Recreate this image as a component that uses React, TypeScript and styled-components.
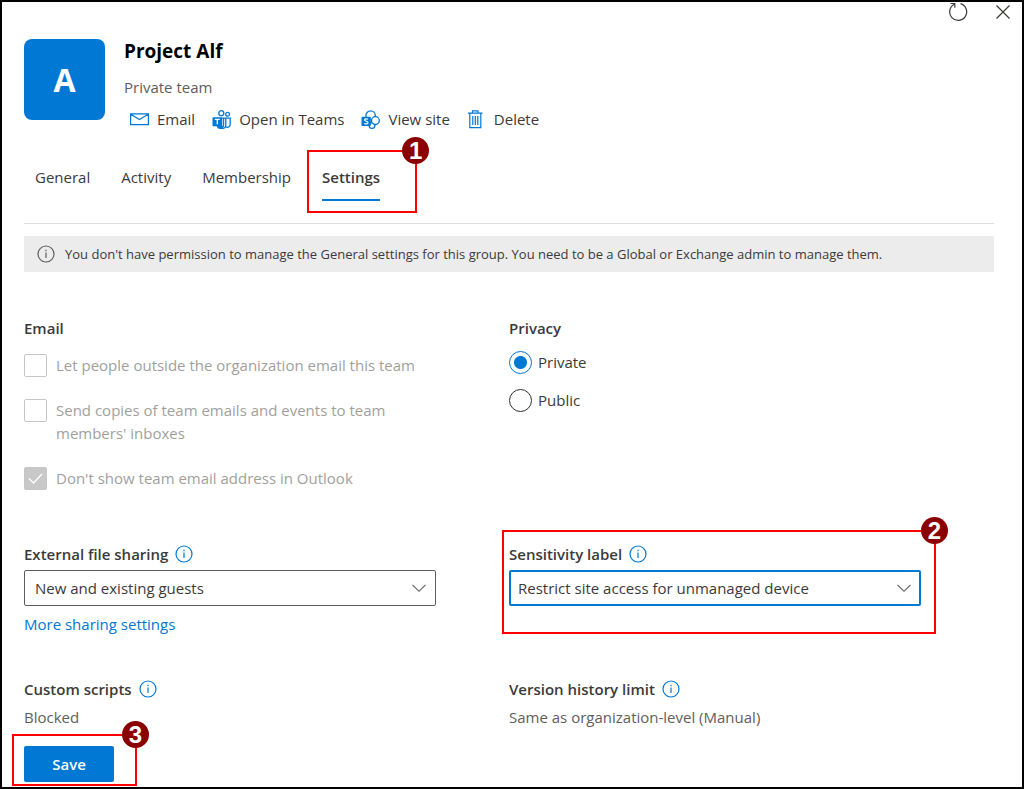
import React, { ReactNode, useState } from "react";
import styled, { createGlobalStyle, css } from "styled-components";

const GlobalStyle = createGlobalStyle`
  *, *::before, *::after { box-sizing: border-box; }
  body {
    margin: 0;
    background: #fff;
    color: #3b3a39;
    font-family: "Open Sans", "Noto Sans", sans-serif;
    font-size: 15px;
    line-height: 24px;
  }
  button, select, input { font: inherit; color: inherit; }
`;

const blue = "#0078d4";

const Panel = styled.div`
  min-height: 100vh;
  border: 2px solid #000;
  padding: 0 28px 5px 22px;
`;

const TopBar = styled.div`
  display: flex;
  justify-content: flex-end;
  gap: 25px;
  height: 20px;
  margin: 0 -19px 17px 0;
`;

const IconButton = styled.button`
  display: flex;
  align-items: center;
  justify-content: center;
  width: 20px;
  height: 20px;
  padding: 0;
  border: 0;
  background: none;
`;

const Header = styled.header`
  display: flex;
  gap: 19px;
`;

const Avatar = styled.div`
  display: flex;
  align-items: center;
  justify-content: center;
  flex: none;
  width: 81px;
  height: 81px;
  border-radius: 8px;
  background: ${blue};
  color: #fff;
  font-size: 32px;
  font-weight: 700;
`;

const Title = styled.h1`
  margin: 0 0 12px;
  color: #000;
  font-size: 19px;
  font-weight: 700;
  line-height: 24px;
`;

const Subtitle = styled.p`
  margin: 0 0 8px;
  color: #605e5c;
`;

const Actions = styled.div`
  display: flex;
  gap: 17px;
  padding-left: 6px;
`;

const ActionButton = styled.button`
  display: flex;
  align-items: center;
  gap: 8px;
  padding: 0;
  border: 0;
  background: none;
  white-space: nowrap;
`;

const Tabs = styled.nav`
  display: flex;
  gap: 31px;
  padding: 34px 11px 22px;
  border-bottom: 1px solid #e1dfdd;
`;

const Tab = styled.button<{ $active?: boolean }>`
  position: relative;
  padding: 0 0 10px;
  border: 0;
  border-bottom: 2px solid ${(p) => (p.$active ? blue : "transparent")};
  background: none;
  font-weight: ${(p) => (p.$active ? 600 : 400)};
`;

const Notice = styled.div`
  display: flex;
  align-items: center;
  gap: 10px;
  min-height: 36px;
  margin-top: 12px;
  padding: 0 13px;
  background: #ececec;
  font-size: 13px;
`;

const Grid = styled.div`
  display: grid;
  grid-template-columns: 1fr 1fr;
  padding-top: 44px;
`;

const Cell = styled.section<{ $space?: number }>`
  position: relative;
  padding-bottom: ${(p) => p.$space ?? 0}px;
`;

const Group = styled.fieldset`
  margin: 0;
  padding: 0;
  border: 0;
`;

const headingText = css`
  font-weight: 600;
  font-size: 15px;
  line-height: 24px;
`;

const Legend = styled.legend`
  ${headingText}
  padding: 0;
`;

const Heading = styled.div`
  ${headingText}
  display: flex;
  align-items: center;
  gap: 7px;
  margin-bottom: 4px;
`;

const CheckList = styled.div`
  display: grid;
  gap: 22px;
  width: 85%;
  padding-top: 14px;
  padding-bottom: 1px;
`;

const RadioList = styled.div`
  display: grid;
  gap: 15px;
  padding-top: 11px;
`;

const Choice = styled.label<{ $disabled?: boolean; $gap: number }>`
  display: flex;
  gap: ${(p) => p.$gap}px;
  line-height: 23px;
  color: ${(p) => (p.$disabled ? "#a19f9d" : "inherit")};
`;

const Mark = styled.span`
  position: relative;
  flex: none;
  width: 23px;
  height: 23px;

  svg {
    position: absolute;
    inset: 0;
    pointer-events: none;
  }
`;

const CheckInput = styled.input`
  appearance: none;
  display: block;
  width: 23px;
  height: 23px;
  margin: 0;
  border: 1px solid #c8c6c4;
  border-radius: 2px;
  &:checked { background: #c8c8c8; }
`;

const RadioInput = styled.input`
  appearance: none;
  display: block;
  width: 23px;
  height: 23px;
  margin: 0;
  border: 1px solid #323130;
  border-radius: 50%;
  &:checked {
    border-color: ${blue};
    background: radial-gradient(circle, ${blue} 0 6px, #fff 7px);
  }
`;

const SelectBox = styled.div`
  position: relative;
  width: 85%;
  margin-bottom: 6px;

  svg {
    position: absolute;
    right: 9px;
    top: 10px;
    pointer-events: none;
  }
`;

const Select = styled.select<{ $focused?: boolean }>`
  appearance: none;
  display: block;
  width: 100%;
  height: 36px;
  padding: 0 32px 0 ${(p) => (p.$focused ? 7 : 10)}px;
  border: ${(p) => (p.$focused ? `2px solid ${blue}` : "1px solid #605e5c")};
  border-radius: 2px;
  background: #fff;
  outline: none;
`;

const Link = styled.a`
  color: ${blue};
  text-decoration: none;
`;

const Value = styled.div`
  color: #605e5c;
`;

const Footer = styled.div`
  position: relative;
  width: max-content;
  margin-top: 17px;
`;

const SaveButton = styled.button`
  display: block;
  width: 90px;
  height: 36px;
  border: 0;
  border-radius: 2px;
  background: ${blue};
  color: #fff;
  font-weight: 600;
`;

const Outline = styled.span<{ $inset: string }>`
  position: absolute;
  inset: ${(p) => p.$inset};
  border: 2px solid #f00;
  pointer-events: none;
`;

const Badge = styled.span`
  position: absolute;
  top: -15px;
  right: -14px;
  width: 27px;
  height: 27px;
  border-radius: 50%;
  background: #8b0000;
  color: #fff;
  font: bold 24px/27px "Liberation Sans", Arial, sans-serif;
  text-align: center;
`;

function Callout({ step, inset }: { step: number; inset: string }) {
  return (
    <Outline $inset={inset}>
      <Badge>{step}</Badge>
    </Outline>
  );
}

function InfoIcon({ color = blue }: { color?: string }) {
  return (
    <svg width="18" height="18" viewBox="0 0 18 18" fill="none" stroke={color} strokeWidth="1.2" aria-hidden="true">
      <circle cx="9" cy="9" r="8" />
      <path d="M9 7.6v5.4M9 4.8v1.4" />
    </svg>
  );
}

function Chevron() {
  return (
    <svg width="16" height="16" viewBox="0 0 16 16" fill="none" stroke="#605e5c" strokeWidth="1.1" aria-hidden="true">
      <path d="M1.5 4.8L8 11.3l6.5-6.5" />
    </svg>
  );
}

function MailIcon() {
  return (
    <svg width="19" height="19" viewBox="0 0 19 19" fill="none" stroke={blue} strokeWidth="1.2" aria-hidden="true">
      <path d="M.6 3.8h17.8v10.8H.6zM.8 4.3l8.7 5.2 8.7-5.2" />
    </svg>
  );
}

function TeamsIcon() {
  return (
    <svg width="19" height="19" viewBox="0 0 19 19" fill="none" stroke={blue} strokeWidth="1.3" aria-hidden="true">
      <circle cx="9.3" cy="3.2" r="2.5" />
      <circle cx="15.6" cy="4.3" r="1.9" />
      <path d="M14 8.2h4.2v6.3a2.8 2.8 0 0 1-4.2 2.4" />
      <path d="M9.5 8.2h4.3v6.8a3.4 3.4 0 0 1-3.4 3.4H8.500a3.400 3.400 0 0 1-3.300-2.400" />
      <path d="M5 15.800h5.800V8.200h1.400v6.800c0 2-1.200 3.300-3.200 3.300-2.200 0-3.500-1-4-2.500z" fill={blue} stroke="none" />
      <rect x=".5" y="7.200" width="9.600" height="9" rx=".8" fill={blue} stroke="none" />
      <path d="M2.800 9.400h5M5.300 9.400v4.900" stroke="#fff" />
    </svg>
  );
}

function SharePointIcon() {
  return (
    <svg width="19" height="19" viewBox="0 0 19 19" fill="#fff" stroke={blue} strokeWidth="1.3" aria-hidden="true">
      <circle cx="11" cy="15.400" r="2.900" />
      <circle cx="9.600" cy="5.500" r="4.700" />
      <circle cx="14.400" cy="10.600" r="3.900" />
      <rect x=".5" y="6.800" width="9.300" height="9.300" rx=".8" fill={blue} stroke="none" />
      <path d="M7 9.300c-1.300-.8-3.400-.6-3.400.7 0 1.500 3.400 1 3.400 2.700 0 1.400-2.300 1.600-3.700.7" fill="none" stroke="#fff" strokeWidth="1.200" />
    </svg>
  );
}

function TrashIcon() {
  return (
    <svg width="19" height="19" viewBox="0 0 19 19" fill="none" stroke={blue} strokeWidth="1.2" aria-hidden="true">
      <path d="M1 3.200h14.500M5.500 3V.9H11V3M2.800 3.400v14.200h11V3.400M5.800 6v9M8.300 6v9M10.800 6v9" />
    </svg>
  );
}

function RefreshIcon() {
  return (
    <svg width="20" height="20" viewBox="0 0 20 20" fill="none" stroke="#3b3a39" strokeWidth="1.2" aria-hidden="true">
      <path d="M12.500 1.700A8.500 8.500 0 1 1 6.300 2.300M2.500 1.500h4.300v4.300" />
    </svg>
  );
}

function CloseIcon() {
  return (
    <svg width="20" height="20" viewBox="0 0 20 20" fill="none" stroke="#3b3a39" strokeWidth="1.2" aria-hidden="true">
      <path d="M3.500 3.500l13 13M16.500 3.500l-13 13" />
    </svg>
  );
}

function Check({ children, checked }: { children: ReactNode; checked?: boolean }) {
  return (
    <Choice $disabled $gap={9}>
      <Mark>
        <CheckInput type="checkbox" disabled defaultChecked={checked} />
        {checked && (
          <svg viewBox="0 0 23 23" fill="none" stroke="#fff" strokeWidth="1.4" aria-hidden="true">
            <path d="M5 11.500l4.500 4.500 8.500-9" />
          </svg>
        )}
      </Mark>
      <span>{children}</span>
    </Choice>
  );
}

export default function App() {
  const [privacy, setPrivacy] = useState("Private");

  return (
    <>
      <GlobalStyle />
      <Panel>
        <TopBar>
          <IconButton aria-label="Refresh"><RefreshIcon /></IconButton>
          <IconButton aria-label="Close"><CloseIcon /></IconButton>
        </TopBar>
        <Header>
          <Avatar>A</Avatar>
          <div>
            <Title>Project Alf</Title>
            <Subtitle>Private team</Subtitle>
            <Actions>
              <ActionButton><MailIcon />Email</ActionButton>
              <ActionButton><TeamsIcon />Open in Teams</ActionButton>
              <ActionButton><SharePointIcon />View site</ActionButton>
              <ActionButton><TrashIcon />Delete</ActionButton>
            </Actions>
          </div>
        </Header>
        <Tabs>
          <Tab>General</Tab>
          <Tab>Activity</Tab>
          <Tab>Membership</Tab>
          <Tab $active>
            Settings
            <Callout step={1} inset="-15px -37px -14px -15px" />
          </Tab>
        </Tabs>
        <Notice>
          <InfoIcon color="#605e5c" />
          <span>You don't have permission to manage the General settings for this group. You need to be a Global or Exchange admin to manage them.</span>
        </Notice>
        <Grid>
          <Cell $space={51}>
            <Group>
              <Legend>Email</Legend>
              <CheckList>
                <Check>Let people outside the organization email this team</Check>
                <Check>Send copies of team emails and events to team members' inboxes</Check>
                <Check checked>Don't show team email address in Outlook</Check>
              </CheckList>
            </Group>
          </Cell>
          <Cell>
            <Group>
              <Legend>Privacy</Legend>
              <RadioList>
                {["Private", "Public"].map((name) => (
                  <Choice key={name} $gap={6}>
                    <RadioInput type="radio" name="privacy" checked={privacy === name} onChange={() => setPrivacy(name)} />
                    <span>{name}</span>
                  </Choice>
                ))}
              </RadioList>
            </Group>
          </Cell>
          <Cell $space={41}>
            <Heading><label htmlFor="sharing">External file sharing</label><InfoIcon /></Heading>
            <SelectBox>
              <Select id="sharing"><option>New and existing guests</option></Select>
              <Chevron />
            </SelectBox>
            <Link href="#sharing">More sharing settings</Link>
          </Cell>
          <Cell>
            <Heading><label htmlFor="label">Sensitivity label</label><InfoIcon /></Heading>
            <SelectBox>
              <Select id="label" $focused><option>Restrict site access for unmanaged device</option></Select>
              <Chevron />
            </SelectBox>
            <Callout step={2} inset="-12px 58px 43px -7px" />
          </Cell>
          <Cell>
            <Heading>Custom scripts<InfoIcon /></Heading>
            <Value>Blocked</Value>
          </Cell>
          <Cell>
            <Heading>Version history limit<InfoIcon /></Heading>
            <Value>Same as organization-level (Manual)</Value>
          </Cell>
        </Grid>
        <Footer>
          <SaveButton>Save</SaveButton>
          <Callout step={3} inset="-12px -23px -4px -12px" />
        </Footer>
      </Panel>
    </>
  );
}
